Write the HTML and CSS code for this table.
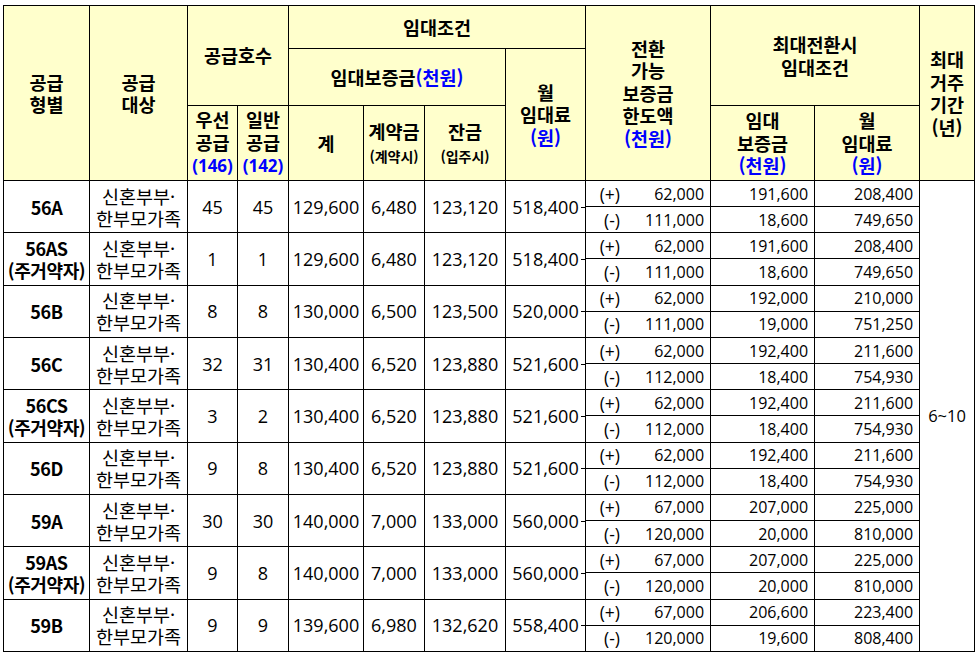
FILE: index.html
```html
<!DOCTYPE html>
<html lang="ko">
<head>
<meta charset="utf-8">
<title>임대조건</title>
<link rel="stylesheet" href="styles.css">
</head>
<body>
<table class="rent">
  <colgroup>
    <col class="c1"><col class="c2"><col class="c3"><col class="c4"><col class="c5"><col class="c6">
    <col class="c7"><col class="c8"><col class="c9"><col class="c10"><col class="c11"><col class="c12">
  </colgroup>
  <thead>
    <tr class="h1">
      <th rowspan="3">공급<br>형별</th>
      <th rowspan="3">공급<br>대상</th>
      <th colspan="2" rowspan="2">공급호수</th>
      <th colspan="4">임대조건</th>
      <th rowspan="3">전환<br>가능<br>보증금<br>한도액<br><span class="blue">(천원)</span></th>
      <th colspan="2" rowspan="2">최대전환시<br>임대조건</th>
      <th rowspan="3">최대<br>거주<br>기간<br>(년)</th>
    </tr>
    <tr class="h2">
      <th colspan="3">임대보증금<span class="blue">(천원)</span></th>
      <th rowspan="2">월<br>임대료<br><span class="blue">(원)</span></th>
    </tr>
    <tr class="h3">
      <th>우선<br>공급<br><span class="blue lat">(146)</span></th>
      <th>일반<br>공급<br><span class="blue lat">(142)</span></th>
      <th>계</th>
      <th>계약금<br><span class="sm">(계약시)</span></th>
      <th>잔금<br><span class="sm">(입주시)</span></th>
      <th>임대<br>보증금<br><span class="blue">(천원)</span></th>
      <th>월<br>임대료<br><span class="blue">(원)</span></th>
    </tr>
  </thead>
  <tbody>
    <tr>
      <td rowspan="2" class="type">56A</td>
      <td rowspan="2" class="tgt">신혼부부·<br>한부모가족</td>
      <td rowspan="2" class="cnt">45</td><td rowspan="2" class="cnt">45</td>
      <td rowspan="2" class="big">129,600</td><td rowspan="2" class="big">6,480</td><td rowspan="2" class="big">123,120</td><td rowspan="2" class="big mon">518,400</td>
      <td class="conv"><div class="cv"><span class="sg">(+)</span><span class="v">62,000</span></div></td><td class="r">191,600</td><td class="r">208,400</td>
      <td rowspan="18" class="period">6~10</td>
    </tr>
    <tr><td class="conv"><div class="cv"><span class="sg">(-)</span><span class="v">111,000</span></div></td><td class="r">18,600</td><td class="r">749,650</td></tr>

    <tr>
      <td rowspan="2" class="type">56AS<br>(주거약자)</td>
      <td rowspan="2" class="tgt">신혼부부·<br>한부모가족</td>
      <td rowspan="2" class="cnt">1</td><td rowspan="2" class="cnt">1</td>
      <td rowspan="2" class="big">129,600</td><td rowspan="2" class="big">6,480</td><td rowspan="2" class="big">123,120</td><td rowspan="2" class="big mon">518,400</td>
      <td class="conv"><div class="cv"><span class="sg">(+)</span><span class="v">62,000</span></div></td><td class="r">191,600</td><td class="r">208,400</td>
    </tr>
    <tr><td class="conv"><div class="cv"><span class="sg">(-)</span><span class="v">111,000</span></div></td><td class="r">18,600</td><td class="r">749,650</td></tr>

    <tr>
      <td rowspan="2" class="type">56B</td>
      <td rowspan="2" class="tgt">신혼부부·<br>한부모가족</td>
      <td rowspan="2" class="cnt">8</td><td rowspan="2" class="cnt">8</td>
      <td rowspan="2" class="big">130,000</td><td rowspan="2" class="big">6,500</td><td rowspan="2" class="big">123,500</td><td rowspan="2" class="big mon">520,000</td>
      <td class="conv"><div class="cv"><span class="sg">(+)</span><span class="v">62,000</span></div></td><td class="r">192,000</td><td class="r">210,000</td>
    </tr>
    <tr><td class="conv"><div class="cv"><span class="sg">(-)</span><span class="v">111,000</span></div></td><td class="r">19,000</td><td class="r">751,250</td></tr>

    <tr>
      <td rowspan="2" class="type">56C</td>
      <td rowspan="2" class="tgt">신혼부부·<br>한부모가족</td>
      <td rowspan="2" class="cnt">32</td><td rowspan="2" class="cnt">31</td>
      <td rowspan="2" class="big">130,400</td><td rowspan="2" class="big">6,520</td><td rowspan="2" class="big">123,880</td><td rowspan="2" class="big mon">521,600</td>
      <td class="conv"><div class="cv"><span class="sg">(+)</span><span class="v">62,000</span></div></td><td class="r">192,400</td><td class="r">211,600</td>
    </tr>
    <tr><td class="conv"><div class="cv"><span class="sg">(-)</span><span class="v">112,000</span></div></td><td class="r">18,400</td><td class="r">754,930</td></tr>

    <tr>
      <td rowspan="2" class="type">56CS<br>(주거약자)</td>
      <td rowspan="2" class="tgt">신혼부부·<br>한부모가족</td>
      <td rowspan="2" class="cnt">3</td><td rowspan="2" class="cnt">2</td>
      <td rowspan="2" class="big">130,400</td><td rowspan="2" class="big">6,520</td><td rowspan="2" class="big">123,880</td><td rowspan="2" class="big mon">521,600</td>
      <td class="conv"><div class="cv"><span class="sg">(+)</span><span class="v">62,000</span></div></td><td class="r">192,400</td><td class="r">211,600</td>
    </tr>
    <tr><td class="conv"><div class="cv"><span class="sg">(-)</span><span class="v">112,000</span></div></td><td class="r">18,400</td><td class="r">754,930</td></tr>

    <tr>
      <td rowspan="2" class="type">56D</td>
      <td rowspan="2" class="tgt">신혼부부·<br>한부모가족</td>
      <td rowspan="2" class="cnt">9</td><td rowspan="2" class="cnt">8</td>
      <td rowspan="2" class="big">130,400</td><td rowspan="2" class="big">6,520</td><td rowspan="2" class="big">123,880</td><td rowspan="2" class="big mon">521,600</td>
      <td class="conv"><div class="cv"><span class="sg">(+)</span><span class="v">62,000</span></div></td><td class="r">192,400</td><td class="r">211,600</td>
    </tr>
    <tr><td class="conv"><div class="cv"><span class="sg">(-)</span><span class="v">112,000</span></div></td><td class="r">18,400</td><td class="r">754,930</td></tr>

    <tr>
      <td rowspan="2" class="type">59A</td>
      <td rowspan="2" class="tgt">신혼부부·<br>한부모가족</td>
      <td rowspan="2" class="cnt">30</td><td rowspan="2" class="cnt">30</td>
      <td rowspan="2" class="big">140,000</td><td rowspan="2" class="big">7,000</td><td rowspan="2" class="big">133,000</td><td rowspan="2" class="big mon">560,000</td>
      <td class="conv"><div class="cv"><span class="sg">(+)</span><span class="v">67,000</span></div></td><td class="r">207,000</td><td class="r">225,000</td>
    </tr>
    <tr><td class="conv"><div class="cv"><span class="sg">(-)</span><span class="v">120,000</span></div></td><td class="r">20,000</td><td class="r">810,000</td></tr>

    <tr>
      <td rowspan="2" class="type">59AS<br>(주거약자)</td>
      <td rowspan="2" class="tgt">신혼부부·<br>한부모가족</td>
      <td rowspan="2" class="cnt">9</td><td rowspan="2" class="cnt">8</td>
      <td rowspan="2" class="big">140,000</td><td rowspan="2" class="big">7,000</td><td rowspan="2" class="big">133,000</td><td rowspan="2" class="big mon">560,000</td>
      <td class="conv"><div class="cv"><span class="sg">(+)</span><span class="v">67,000</span></div></td><td class="r">207,000</td><td class="r">225,000</td>
    </tr>
    <tr><td class="conv"><div class="cv"><span class="sg">(-)</span><span class="v">120,000</span></div></td><td class="r">20,000</td><td class="r">810,000</td></tr>

    <tr>
      <td rowspan="2" class="type">59B</td>
      <td rowspan="2" class="tgt">신혼부부·<br>한부모가족</td>
      <td rowspan="2" class="cnt">9</td><td rowspan="2" class="cnt">9</td>
      <td rowspan="2" class="big">139,600</td><td rowspan="2" class="big">6,980</td><td rowspan="2" class="big">132,620</td><td rowspan="2" class="big mon">558,400</td>
      <td class="conv"><div class="cv"><span class="sg">(+)</span><span class="v">67,000</span></div></td><td class="r">206,600</td><td class="r">223,400</td>
    </tr>
    <tr><td class="conv"><div class="cv"><span class="sg">(-)</span><span class="v">120,000</span></div></td><td class="r">19,600</td><td class="r">808,400</td></tr>
  </tbody>
</table>
</body>
</html>
```
FILE: styles.css
```css
html, body {
  margin: 0;
  padding: 0;
  background: #ffffff;
}
body {
  padding: 5px 0 0 3px;
  font-family: "Noto Sans CJK KR", "Noto Sans", sans-serif;
  color: #000;
}
.rent {
  border-collapse: collapse;
  table-layout: fixed;
  width: 971px;
  border: 1px solid #000;
}
.c1 { width: 86px; }
.c2 { width: 98px; }
.c3 { width: 50px; }
.c4 { width: 51px; }
.c5 { width: 75px; }
.c6 { width: 61px; }
.c7 { width: 81px; }
.c8 { width: 80px; }
.c9 { width: 125px; }
.c10 { width: 104px; }
.c11 { width: 105px; }
.c12 { width: 55px; }

.rent th, .rent td {
  border: 1px solid #000;
  padding: 0;
  vertical-align: middle;
  text-align: center;
}
.rent th {
  background: #ffffcc;
  font-weight: 700;
  font-size: 18.5px;
  line-height: 22.5px;
}
.h1 { height: 43px; }
.h2 { height: 57px; }
.h3 { height: 75px; }

.blue { color: #0000ff; }
.lat {
  font-family: "Open Sans", "Noto Sans CJK KR", sans-serif;
  font-size: 17px;
}
.sm {
  font-size: 14px;
  line-height: 20px;
}

.rent tbody tr { height: 26.17px; }
.rent td {
  font-family: "Open Sans", "Noto Sans CJK KR", sans-serif;
  font-size: 16px;
  line-height: 22px;
  white-space: nowrap;
}
.rent td.type {
  font-family: "Noto Sans CJK KR", sans-serif;
  font-weight: 700;
  font-size: 18px;
  letter-spacing: -0.4px;
}
.rent td.tgt {
  font-family: "Noto Sans CJK KR", sans-serif;
  font-size: 18.5px;
}
.rent td.cnt { font-size: 18px; }
.rent td.big { font-size: 18px; }
.mon { position: relative; }
.mon::after {
  content: "";
  position: absolute;
  right: 0;
  top: 50%;
  width: 4px;
  height: 1px;
  background: #000;
}
.rent td.r {
  text-align: right;
  padding-right: 6px;
}
.cv {
  display: flex;
  align-items: center;
}
.sg {
  width: 34px;
  text-align: right;
  flex: none;
  font-size: 17.5px;
}
.v {
  flex: 1;
  text-align: right;
  padding-right: 6px;
}
.rent td.period { font-size: 16.5px; }
```
